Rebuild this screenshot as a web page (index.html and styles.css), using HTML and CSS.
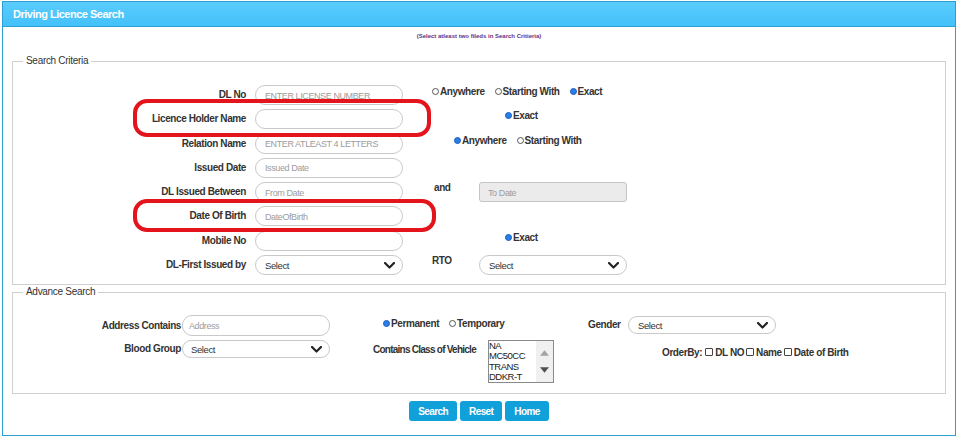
FILE: index.html
```html
<!DOCTYPE html>
<html lang="en">
<head>
<meta charset="utf-8">
<title>Driving Licence Search</title>
<link rel="stylesheet" href="styles.css">
</head>
<body>
<div class="panel">
  <div class="panel-head">Driving Licence Search</div>
  <div class="panel-body">
    <p class="note">(Select atleast two fileds in Search Critieria)</p>

    <fieldset class="box box-criteria">
      <legend>Search Criteria</legend>
      <div class="crit-grid">
        <label class="lbl">DL No</label>
        <input class="field" type="text" placeholder="ENTER LICENSE NUMBER">
        <div class="opts pad-a">
          <span class="opt"><span class="radio"></span>Anywhere</span>
          <span class="opt"><span class="radio"></span>Starting With</span>
          <span class="opt"><span class="radio on"></span>Exact</span>
        </div>

        <label class="lbl">Licence Holder Name</label>
        <input class="field" type="text">
        <div class="opts pad-b">
          <span class="opt"><span class="radio on"></span>Exact</span>
        </div>

        <label class="lbl">Relation Name</label>
        <input class="field" type="text" placeholder="ENTER ATLEAST 4 LETTERS">
        <div class="opts pad-c">
          <span class="opt"><span class="radio on"></span>Anywhere</span>
          <span class="opt"><span class="radio"></span>Starting With</span>
        </div>

        <label class="lbl">Issued Date</label>
        <input class="field" type="text" placeholder="Issued Date">
        <div class="opts"></div>

        <label class="lbl">DL Issued Between</label>
        <input class="field" type="text" placeholder="From Date">
        <div class="pair pad-and">
          <span class="pair-lbl w-and">and</span>
          <input class="field field-flat" type="text" placeholder="To Date">
        </div>

        <label class="lbl">Date Of Birth</label>
        <input class="field" type="text" placeholder="DateOfBirth">
        <div class="opts"></div>

        <label class="lbl">Mobile No</label>
        <input class="field" type="text">
        <div class="opts pad-b">
          <span class="opt"><span class="radio on"></span>Exact</span>
        </div>

        <label class="lbl">DL-First Issued by</label>
        <div class="field dd"><span>Select</span><svg class="chev" viewBox="0 0 11 7"><path d="M1 1 L5.5 5.5 L10 1"/></svg></div>
        <div class="pair pad-rto">
          <span class="pair-lbl w-rto">RTO</span>
          <div class="field dd"><span>Select</span><svg class="chev" viewBox="0 0 11 7"><path d="M1 1 L5.5 5.5 L10 1"/></svg></div>
        </div>
      </div>
    </fieldset>

    <fieldset class="box box-adv">
      <legend>Advance Search</legend>
      <div class="adv-grid">
        <label class="lbl lbl-adv">Address Contains</label>
        <input class="field field-adv" type="text" placeholder="Address">
        <div class="adv-c1">
          <span class="opt"><span class="radio on"></span>Permanent</span>
          <span class="opt"><span class="radio"></span>Temporary</span>
        </div>
        <div class="adv-d1">
          <span class="lbl gender">Gender</span>
          <div class="field dd dd-sm"><span>Select</span><svg class="chev" viewBox="0 0 11 7"><path d="M1 1 L5.5 5.5 L10 1"/></svg></div>
        </div>

        <label class="lbl lbl-adv lbl-top">Blood Group</label>
        <div class="field dd dd-sm dd-blood"><span>Select</span><svg class="chev" viewBox="0 0 11 7"><path d="M1 1 L5.5 5.5 L10 1"/></svg></div>
        <div class="adv-c2">
          <span class="lbl cov">Contains Class of Vehicle</span>
          <div class="listbox">
            <div class="list-items">
              <div>NA</div>
              <div>MC50CC</div>
              <div>TRANS</div>
              <div>DDKR-T</div>
            </div>
            <div class="list-bar">
              <svg class="tri" viewBox="0 0 10 6"><path class="tri-up" d="M0 6 L5 0 L10 6 Z"/></svg>
              <svg class="tri" viewBox="0 0 10 6"><path class="tri-down" d="M0 0 L10 0 L5 6 Z"/></svg>
            </div>
          </div>
        </div>
        <div class="adv-d2">
          <span class="lbl orderby">OrderBy:</span>
          <span class="opt"><span class="check"></span>DL NO</span>
          <span class="opt"><span class="check"></span>Name</span>
          <span class="opt"><span class="check"></span>Date of Birth</span>
        </div>
      </div>
    </fieldset>

    <div class="actions">
      <button class="btn" type="button">Search</button>
      <button class="btn" type="button">Reset</button>
      <button class="btn" type="button">Home</button>
    </div>
  </div>

  <div class="mark mark-1"></div>
  <div class="mark mark-2"></div>
</div>
</body>
</html>
```

FILE: styles.css
```css
* { box-sizing: border-box; }

body {
  margin: 0;
  background: #fff;
  color: #333;
  font-family: "Liberation Sans", Arial, sans-serif;
  font-size: 10px;
  letter-spacing: -0.4px;
}

.panel {
  position: relative;
  margin: 1px 0 0 2px;
  width: 954px;
  height: 435px;
  border: 1px solid #2b9fd1;
  background: #fff;
}

.panel-head {
  height: 25px;
  line-height: 24px;
  padding-left: 10px;
  background: linear-gradient(#5accfc, #43c1fa);
  border-bottom: 1px solid #2b9fd1;
  color: #fff;
  font-weight: bold;
  font-size: 11px;
  letter-spacing: -0.5px;
}

.panel-body {
  padding: 0 9px;
}

.note {
  margin: 4px 0 0;
  text-align: center;
  font-size: 6px;
  line-height: 10px;
  font-weight: bold;
  letter-spacing: 0;
  color: #6b2f7c;
}

.box {
  margin: 0;
  min-width: 0;
  border: 1px solid #cfcfcf;
  padding: 0 0 0 10px;
}

.box legend {
  padding: 0 3px;
  font-size: 10px;
  line-height: 14px;
  letter-spacing: -0.3px;
  color: #333;
}

.box-criteria {
  margin-top: 13px;
  padding-top: 17px;
  padding-bottom: 9px;
}

.box-adv {
  padding-top: 16px;
  padding-bottom: 10px;
}

/* ---- criteria grid ---- */
.crit-grid {
  display: grid;
  grid-template-columns: 232px 148px 1fr;
  grid-auto-rows: 20px;
  row-gap: 4.3px;
}

.lbl {
  font-weight: bold;
  color: #333;
  font-size: 10px;
  white-space: nowrap;
}

.crit-grid .lbl {
  text-align: right;
  padding-right: 9px;
  line-height: 20px;
}

.field {
  height: 20px;
  width: 148px;
  margin: 0;
  border: 1px solid #c9c9c9;
  border-radius: 10px;
  padding: 0 9px;
  background: #fff;
  font-family: inherit;
  font-size: 9.5px;
  letter-spacing: -0.4px;
  color: #333;
  outline: none;
}

.field::placeholder {
  color: #9c9c9c;
  font-size: 9px;
}

.field-flat {
  border-radius: 3px;
  background: #ebebeb;
  border-color: #c4c4c4;
  padding-left: 8px;
}

.dd {
  display: flex;
  align-items: center;
  justify-content: space-between;
  padding-right: 7px;
  color: #333;
}

.chev {
  width: 11px;
  height: 7px;
}

.chev path {
  fill: none;
  stroke: #222;
  stroke-width: 2.2;
  stroke-linecap: round;
  stroke-linejoin: round;
}

.opts {
  display: flex;
  align-items: flex-start;
  line-height: 13px;
}

.pad-a { padding-left: 29px; }
.pad-b { padding-left: 102px; }
.pad-c { padding-left: 51px; }

.opt {
  display: inline-flex;
  align-items: center;
  margin-right: 10px;
  font-weight: bold;
  white-space: nowrap;
  line-height: 13px;
}

.radio {
  width: 7px;
  height: 7px;
  margin-right: 1px;
  border: 1px solid #555;
  border-radius: 50%;
  background: #fff;
  flex: none;
}

.radio.on {
  background: #2a7ee8;
  border-color: #1b5fbf;
}

.pair {
  display: flex;
  align-items: flex-start;
}

.pad-and { padding-left: 31px; }
.pad-rto { padding-left: 29px; }

.pair-lbl {
  font-weight: bold;
  line-height: 11px;
  flex: none;
}

.w-and { width: 45px; }
.w-rto { width: 47px; }

/* ---- advance grid ---- */
.adv-grid {
  display: grid;
  grid-template-columns: 159px 148px 258px 1fr;
  grid-template-rows: 21px 43px;
  row-gap: 4px;
}

.lbl-adv {
  text-align: right;
  padding-right: 1px;
  line-height: 21px;
}

.lbl-top {
  line-height: 18px;
}

.field-adv {
  height: 21px;
  padding-left: 6px;
}

.dd-sm {
  height: 18px;
  padding-left: 9px;
}

.dd-blood {
  padding-left: 8px;
}

.adv-c1 {
  display: flex;
  align-items: flex-start;
  padding-left: 53px;
  padding-top: 2px;
}

.adv-d1 {
  display: flex;
  align-items: flex-start;
  padding-top: 1px;
}

.gender {
  width: 40px;
  line-height: 18px;
}

.adv-c2 {
  display: flex;
  align-items: flex-start;
  padding-left: 43px;
}

.cov {
  width: 115px;
  padding-top: 3px;
  line-height: 14px;
  letter-spacing: -0.75px;
}

.listbox {
  display: flex;
  width: 66px;
  height: 43px;
  border: 1px solid #8a8a8a;
  background: #fff;
}

.list-items {
  flex: 1;
  font-size: 9.5px;
  line-height: 10.3px;
  letter-spacing: -0.5px;
  color: #222;
}

.list-bar {
  width: 17px;
  background: #f0f0f0;
  display: flex;
  flex-direction: column;
  justify-content: space-between;
  align-items: center;
  padding: 9px 0;
}

.tri {
  width: 9px;
  height: 6px;
}

.tri-up { fill: #a3a3a3; }
.tri-down { fill: #505050; }

.adv-d2 {
  display: flex;
  align-items: center;
  padding-left: 74px;
  padding-top: 5px;
  align-self: start;
  height: 19px;
}

.orderby {
  margin-right: 3px;
}

.adv-d2 .opt {
  margin-right: 2px;
}

.check {
  width: 8px;
  height: 8px;
  margin-right: 2px;
  border: 1px solid #444;
  border-radius: 1px;
  background: #fff;
  flex: none;
}

/* ---- buttons ---- */
.actions {
  display: flex;
  justify-content: center;
  gap: 3px;
  margin-top: 7px;
}

.btn {
  height: 20px;
  padding: 0 9px;
  border: none;
  border-radius: 3px;
  background: #10a0da;
  color: #fff;
  font-family: inherit;
  font-weight: bold;
  font-size: 10px;
  letter-spacing: -0.6px;
}

/* ---- red annotation marks ---- */
.mark {
  position: absolute;
  border: 4px solid #e3141c;
  border-radius: 14px;
  pointer-events: none;
}

.mark-1 {
  left: 130px;
  top: 97px;
  width: 298px;
  height: 38px;
}

.mark-2 {
  left: 130px;
  top: 197px;
  width: 303px;
  height: 33px;
}
```
